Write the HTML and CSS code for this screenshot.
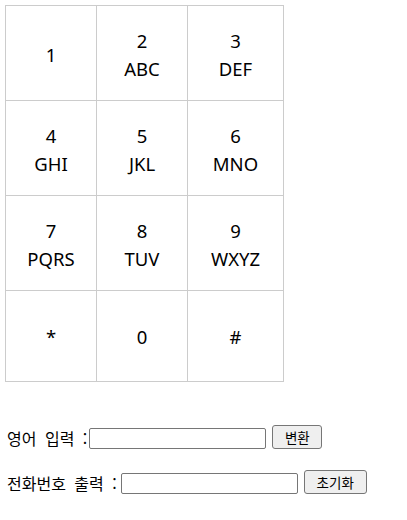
FILE: index.html
```html
<!DOCTYPE html>
<html lang="ko">
<head>
<meta charset="utf-8">
<title>Phone Keypad</title>
<link rel="stylesheet" href="styles.css">
</head>
<body>
<div class="keypad">
  <div class="key">1</div>
  <div class="key">2<br>ABC</div>
  <div class="key">3<br>DEF</div>
  <div class="key">4<br>GHI</div>
  <div class="key">5<br>JKL</div>
  <div class="key">6<br>MNO</div>
  <div class="key">7<br>PQRS</div>
  <div class="key">8<br>TUV</div>
  <div class="key">9<br>WXYZ</div>
  <div class="key">*</div>
  <div class="key">0</div>
  <div class="key">#</div>
</div>
<div class="form">
  <div class="row">
    <label class="label label-in">영어 입력 :</label>
    <input class="field" type="text">
    <button class="btn btn-convert">변환</button>
  </div>
  <div class="row">
    <label class="label label-out">전화번호 출력 :</label>
    <input class="field" type="text">
    <button class="btn btn-reset">초기화</button>
  </div>
</div>
</body>
</html>
```
FILE: styles.css
```css
body {
  margin: 5px;
  font-family: "Noto Sans", "Noto Sans CJK KR", sans-serif;
  font-size: 16px;
  color: #000;
  background: #fff;
}
.keypad {
  display: grid;
  grid-template-columns: 90px 90px 95px;
  grid-template-rows: 94px 94px 94px 90px;
  gap: 1px;
  padding: 1px;
  background: #cccccc;
  width: max-content;
}
.key {
  background: #fff;
  display: flex;
  align-items: center;
  justify-content: center;
  text-align: center;
  font-size: 18.5px;
  line-height: 28px;
  padding-top: 3px;
  box-sizing: border-box;
}
.key:nth-child(n+10) {
  padding-top: 2px;
}
.form {
  margin-top: 43px;
  display: flex;
  flex-direction: column;
  gap: 21px;
}
.row {
  display: flex;
  align-items: flex-end;
  height: 24px;
  padding-left: 2px;
}
.label {
  font-family: "Noto Sans CJK KR", sans-serif;
  font-size: 16px;
  line-height: 21px;
  word-spacing: 4px;
}
.label-in { margin-right: 2px; }
.label-out { margin-right: 4px; }
.field {
  box-sizing: border-box;
  width: 177px;
  height: 21px;
  border: 1px solid #767676;
  border-radius: 2px;
  padding: 1px 2px;
  margin: 0 6px 0 0;
  font-size: 13px;
}
.btn {
  box-sizing: border-box;
  height: 24px;
  margin: 0;
  padding: 0;
  border: 1px solid #767676;
  border-radius: 3px;
  background: #efefef;
  font-family: "Noto Sans CJK KR", sans-serif;
  font-size: 13.5px;
  line-height: 20px;
  color: #000;
}
.btn-convert { width: 50px; }
.btn-reset { width: 63px; }
```
